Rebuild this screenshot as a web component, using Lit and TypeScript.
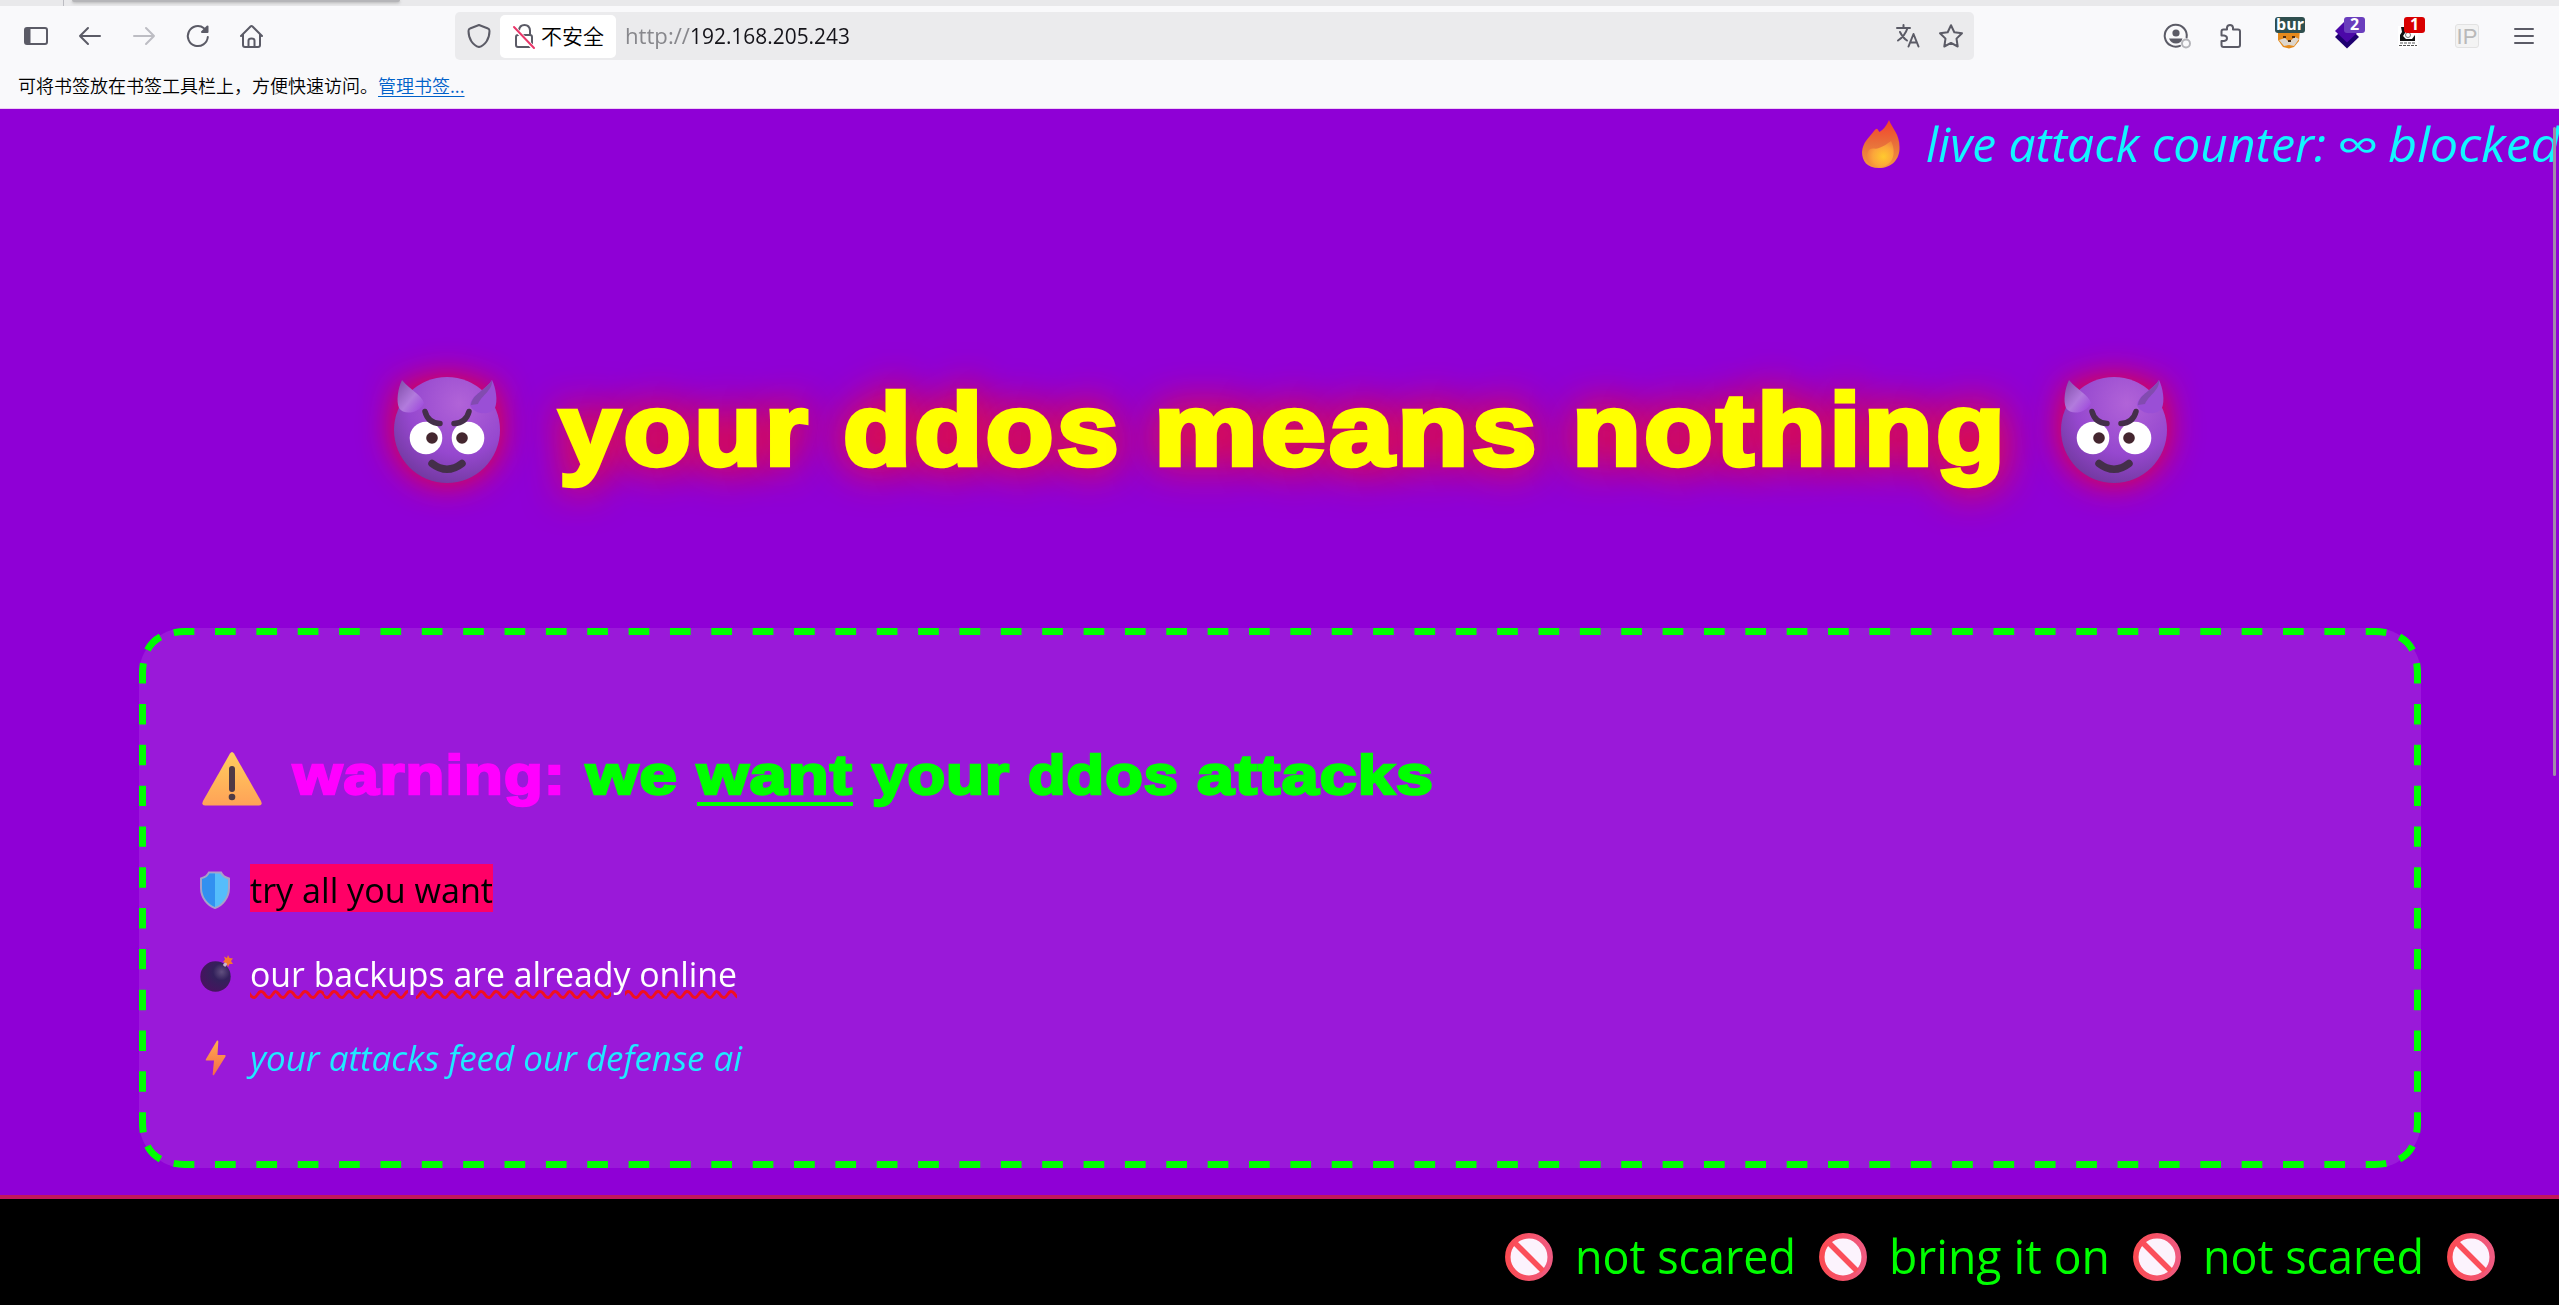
import { LitElement, html, svg, css } from "lit";
import { customElement, property } from "lit/decorators.js";

/** Text run stretched horizontally so that it fills a given width. */
@customElement("fit-text")
class FitText extends LitElement {
  @property({ type: Number }) width = 100;
  static styles = css`
    :host { display: inline-block; white-space: nowrap; line-height: inherit; }
    .run { display: inline-block; transform-origin: 0 50%; }
  `;
  firstUpdated() {
    const run = this.renderRoot.querySelector(".run") as HTMLElement;
    const natural = run.getBoundingClientRect().width;
    this.style.width = `${this.width}px`;
    run.style.transform = `scaleX(${this.width / natural})`;
  }
  render() {
    return html`<span class="run" part="run"><slot></slot></span>`;
  }
}

const devil = html`<svg class="devil" viewBox="0 0 106 106">
  <defs>
    <radialGradient id="face" cx=".62" cy=".25" r=".8">
      <stop offset="0" stop-color="#b163d8" /><stop offset=".6" stop-color="#9648cf" /><stop offset="1" stop-color="#71389f" />
    </radialGradient>
    <linearGradient id="horn" x1="0" y1="0" x2="1" y2="1">
      <stop offset="0" stop-color="#7d4ba6" /><stop offset=".55" stop-color="#b27bdd" /><stop offset="1" stop-color="#9b3fdc" />
    </linearGradient>
  </defs>
  <ellipse cx="53" cy="53" rx="53" ry="53" fill="url(#face)" />
  <path d="M8 3C4 11 2 24 5 31C10 39 26 36 30 26C27 17 16 13 8 3Z" fill="url(#horn)" />
  <path d="M98 3C102 11 104 24 101 31C96 39 80 38 76 28C78 17 92 13 98 3Z" fill="#9a4fd6" />
  <path d="M98 3C99 13 88 18 84 27L77 28C78 17 92 13 98 3Z" fill="#824bb0" />
  <circle cx="32" cy="61" r="16.3" fill="#fff" /><circle cx="74" cy="61" r="16.3" fill="#fff" />
  <circle cx="38" cy="61" r="5.8" fill="#44262f" /><circle cx="68" cy="61" r="5.8" fill="#44262f" />
  <path d="M31 34.500Q34 46 46 46.500M75 34.500Q72 46 60 46.500" fill="none" stroke="#442f4a" stroke-width="5.500" stroke-linecap="round" />
  <path d="M38 86.500Q53 98 68 86.500" fill="none" stroke="#442f4a" stroke-width="7.500" stroke-linecap="round" />
</svg>`;

const noEntry = html`<svg class="ban" viewBox="0 0 48 48">
  <defs><linearGradient id="ban" x1="0" x2="1"><stop offset="0" stop-color="#fb4b53" /><stop offset="1" stop-color="#ef5a80" /></linearGradient></defs>
  <circle cx="24" cy="24" r="21.200" fill="#fcf3fd" stroke="url(#ban)" stroke-width="5.500" />
  <path d="M10 10L38 38" stroke="#fb4f5a" stroke-width="5.500" />
</svg>`;

const corner = svg`<path d="M147.500 650Q151.800 641.500 160.500 636.800" />`;

@customElement("app-root")
class AppRoot extends LitElement {
  static styles = css`
    :host { display: block; width: 2559px; height: 1305px; overflow: hidden; position: relative;
      font-family: "Open Sans", "Noto Sans", sans-serif; background: #8f00d6; }
    * { box-sizing: border-box; }
    .screen { display: flex; flex-direction: column; height: 1305px; }
    svg { display: block; flex: none; overflow: visible; }

    .chrome { flex: none; height: 109px; background: #f9f9fb; border-bottom: 1px solid #efcdf3; }
    .tabs { height: 6px; background: #e9e9eb; display: flex; }
    .tabs .gap { width: 64px; border-right: 1px solid #bcbcc2; }
    .tabs .tab { margin-left: 8px; width: 328px; height: 2px; background: #b5b5b8; border-radius: 0 0 4px 4px; box-shadow: 0 1px 3px #aaa; }
    .nav { display: flex; align-items: center; height: 60px; padding-left: 23px; }
    .nav .line { fill: none; stroke: #5b5b66; stroke-width: 2; stroke-linecap: round; stroke-linejoin: round; }
    .left { display: flex; gap: 28px; align-items: center; width: 432px; }
    .left svg { width: 26px; height: 26px; }
    .left .dim { stroke: #bdbdc3; }
    .url { display: flex; align-items: center; width: 1519px; height: 48px; background: #ebebed; border-radius: 5px; padding: 0 10px 0 11px; }
    .secure { display: flex; align-items: center; width: 116px; height: 43px; margin: 0 9px 0 8px; padding-left: 12px; background: #fff; border-radius: 5px; }
    .secure span { font: 350 21px/30px "Noto Sans CJK SC", sans-serif; color: #000; margin: -2px 0 0 5px; }
    .addr { font-size: 21.500px; line-height: 30px; color: #15141a; flex: 1; white-space: nowrap; display: flex; }
    .addr .scheme { color: #87878c; }
    .url .end { margin-right: 17px; }
    .url .star { margin-right: 0; }
    .tools { display: flex; align-items: center; padding-left: 188px; }
    .ext { position: relative; width: 30px; height: 38px; }
    .badge { position: absolute; top: 0; height: 16px; border-radius: 3px; color: #fff; font: bold 16px/14px "Open Sans", sans-serif; text-align: center; }
    .bur { left: 0; width: 30px; background: #2f4f4f; }
    .two { left: 9px; width: 21px; background: #6a3ebd; }
    .one { left: 6px; width: 21px; background: #d90000; }
    .ip { width: 24px; height: 24px; border: 1px solid #e2e2e2; border-radius: 3px; background: #f3f3f3; color: #b9b9b9; font: 22px/23px "Liberation Sans", sans-serif; text-align: center; }
    .marks { font: 350 18px/26px "Noto Sans CJK SC", sans-serif; color: #000; padding: 6px 0 0 18px; white-space: nowrap; }
    .marks a { color: #0061c9; text-decoration: underline; text-underline-offset: 3px; text-decoration-thickness: 1px; }

    .counter { flex: none; display: flex; align-items: center; height: 70px; padding: 0 0 0 1862px; color: #12f6ff; font-size: 47px; line-height: 70px; font-style: italic; }
    .counter .c1 { margin: 0 12px 0 26px; }
    .counter .c2 { margin-right: 10px; }

    h1 { flex: none; margin: 0; height: 449px; padding: 198px 0 145px; line-height: 106px; display: flex; align-items: center; color: #ff0;
      font-family: "Liberation Sans", Arial, sans-serif; font-weight: 700; font-size: 102px; letter-spacing: 3px; -webkit-text-stroke: 4.500px #ff0; text-shadow: 0 0 44px #ff1414, 0 0 36px #ff1414b0; }
    .devil { width: 106px; height: 106px; filter: drop-shadow(0 0 17px #ff0a0ae6); }
    .head { margin-left: 394px; }
    .words { display: flex; margin: 0 53px 0 59px; gap: 32px; }

    .card { position: relative; flex: none; width: 2282px; height: 540px; margin-left: 139px; border-radius: 46px; background: #9a19d9; padding: 104px 61px 0; }
    .dashes { position: absolute; left: -139px; top: -628px; width: 2559px; height: 1305px; fill: none; stroke: #0f0; stroke-width: 7; }
    h2 { margin: 0; display: flex; align-items: center; height: 86px; line-height: 86px; color: #0f0;
      font-family: "Liberation Sans", Arial, sans-serif; font-weight: 700; font-size: 56px; letter-spacing: 1px; -webkit-text-stroke: 2.600px currentColor; }
    h2 .sign { width: 60px; height: 54px; margin: 8px 31px 0 2px; }
    h2 .pink { color: #f0f; margin-right: 20px; }
    h2 .want { background: linear-gradient(#0f0, #0f0) 0 70px / 100% 4px no-repeat; margin: 0 19px 0 19px; }
    h2 .gap { margin-left: 18px; }
    ul { list-style: none; margin: 30px 0 0; padding: 0; display: flex; flex-direction: column; }
    li { display: flex; align-items: center; height: 84px; font-size: 34.500px; line-height: 48px; color: #fff; }
    li svg { width: 34px; height: 38px; margin-right: 16px; }
    .hit { background: #ff0066; color: #000; height: 48px; line-height: 52px; margin-top: -4px; }
    .wavy::part(run) { text-decoration: underline wavy #f01020 2.500px; text-underline-offset: 3px; }
    .cyan { color: #1feaff; font-style: italic; }

    .marquee { flex: none; margin-top: 27px; height: 110px; border-top: 4px solid #c3175a; background: #000; color: #0f0; display: flex; align-items: center; font-size: 47px; line-height: 60px; padding: 7px 0 0 1505px; gap: 23.500px; }
    .marquee fit-text { margin-left: -2px; }
    .ban { width: 48px; height: 48px; margin-top: 3px; }
    .scroll { position: absolute; left: 2553px; top: 127px; width: 3px; height: 649px; border-radius: 2px; background: #a08ca8; }
  `;

  render() {
    return html`<div class="screen">
      <div class="chrome">
        <div class="tabs"><div class="gap"></div><div class="tab"></div></div>
        <div class="nav">
          <div class="left">
            <svg class="line" viewBox="0 0 26 26"><rect x="2" y="5" width="22" height="16" rx="2" /><path d="M3 6H6.500V20H3Z" fill="#5b5b66" /></svg>
            <svg class="line" viewBox="0 0 26 26"><path d="M23 13H3M11 5L3 13L11 21" /></svg>
            <svg class="line dim" viewBox="0 0 26 26"><path d="M3 13H23M15 5L23 13L15 21" /></svg>
            <svg class="line" viewBox="0 0 26 26"><path d="M22.800 14A10 10 0 1 1 19 5.200" /><path d="M22.500 3.500V9H17Z" fill="#5b5b66" /></svg>
            <svg class="line" viewBox="0 0 26 26"><path d="M2 13L11.500 3.500Q12.500 2.500 13.500 3.500L23 13M4 11.500V22Q4 24 6 24H19Q21 24 21 22V11.500M9.500 24V17.500Q9.500 15.500 12.500 15.500T15.500 17.500V24" /></svg>
          </div>
          <div class="url">
            <svg class="line" width="26" height="26" viewBox="0 0 26 26"><path d="M13 2L22 5.500Q23.500 6 23.500 8C23.500 16 19 22.500 13 24C7 22.500 2.500 16 2.500 8Q2.500 6 4 5.500Z" /></svg>
            <div class="secure">
              <svg class="line" width="24" height="26" viewBox="0 0 24 26"><rect x="4" y="12" width="16" height="12" rx="2" /><path d="M7 12V7.500Q7.500 2 12.500 2T18 7.500V12" /><path d="M2.500 5L21.500 25" stroke="#fff" stroke-width="4" /><path d="M2 4L22 25" stroke="#e9376a" /></svg>
              <span>不安全</span>
            </div>
            <div class="addr"><fit-text class="scheme" width="65">http://</fit-text><fit-text width="160">192.168.205.243</fit-text></div>
            <svg class="line end" width="26" height="26" viewBox="0 0 26 26"><path d="M2 5H15M8.500 2V5M12.500 5Q10 13 3 17.500M5 9Q8 15 12 17.500M13.500 23.500L18.500 11L23.500 23.500M15.200 19.500H21.800" /></svg>
            <svg class="line star" width="26" height="26" viewBox="0 0 26 26"><path d="M13 2.200L16.300 9.200L24 10.200L18.500 15.600L19.700 23.500L13 19.900L6.300 23.500L7.500 15.600L2 10.200L9.700 9.200Z" /></svg>
          </div>
          <div class="tools">
            <svg class="line" width="28" height="26" viewBox="0 0 28 26"><path d="M18 22.800A11 11 0 1 1 24.600 14.500" /><circle cx="14" cy="10" r="3.600" fill="#5b5b66" stroke="none" /><path d="M7 15.500H20.500Q19 20.500 14 20.500T7 15.500Z" fill="#5b5b66" stroke="none" /><circle cx="24" cy="20.500" r="4" stroke="#b5b5ba" /></svg>
            <svg class="line" style="margin-left:28px" width="26" height="26" viewBox="0 0 26 26"><path d="M3.500 8.500Q3.500 6.500 5.500 6.500H9V4.500Q9.500 2 12 2T15 4.500V6.500H20Q22 6.500 22 8.500V22Q22 24 20 24H5.500Q3.500 24 3.500 22V18H6Q9 17.500 9 15.200T6 12.500H3.500Z" /></svg>
            <div class="ext" style="margin-left:31px">
              <svg width="30" height="32" viewBox="0 0 30 32"><path d="M3 13H25L24 24L19 30L14 31.500L8 30L3 23Z" fill="#e58a1c" /><path d="M4 23L10 21L14 25L20 20L24 22L19 29L14 28L9 29Z" fill="#ddd6cc" /><path d="M8 20H11M17 20H20M13 24H16" stroke="#4a2c12" stroke-width="2" /></svg>
              <div class="badge bur">bur</div>
            </div>
            <div class="ext" style="margin-left:30px">
              <svg width="30" height="32" viewBox="0 0 30 32"><path d="M12 8L24 20L12 31.500L0 20Z" fill="#1e0070" /><path d="M12 2L24 14L12 25.500L0 14Z" fill="#4b08a8" /></svg>
              <div class="badge two">2</div>
            </div>
            <div class="ext" style="margin-left:33px">
              <svg width="30" height="32" viewBox="0 0 30 32"><rect width="20" height="22" y="9" fill="#fff" /><path d="M3 10H7V16L5 19L8 22H14L17 18V24H2V18L4 15Z" fill="#111" /><circle cx="10" cy="18" r="2.500" fill="none" stroke="#777" /><path d="M2 26H18M1 28.500H19" stroke="#555" stroke-dasharray="3 1" /></svg>
              <div class="badge one">1</div>
            </div>
            <div class="ip" style="margin-left:27px">IP</div>
            <svg class="line" style="margin-left:36px" width="18" height="18" viewBox="0 0 18 18"><path d="M0 2H18M0 9H18M0 16H18" /></svg>
          </div>
        </div>
        <div class="marks">可将书签放在书签工具栏上，方便快速访问。<a>管理书签...</a></div>
      </div>

      <div class="counter">
        <svg width="38" height="48" viewBox="0 0 38 48">
          <defs><linearGradient id="fl" x1="0" y1="0" x2="0" y2="1"><stop offset="0" stop-color="#f5402a" /><stop offset=".5" stop-color="#e8703a" /><stop offset="1" stop-color="#f59a40" /></linearGradient>
          <radialGradient id="fi" cx=".62" cy=".6" r=".65"><stop offset="0" stop-color="#ffca2e" /><stop offset=".6" stop-color="#fba63a" /><stop offset="1" stop-color="#f0813a" /></radialGradient></defs>
          <path d="M27 0C30 8 37.500 14 37.500 27C38 40 29 48 17 48C5 48 0 41 0 32C1 22 6 19 12 11Q15 7 16 10L17.500 12C21 10 25 5 27 0Z" fill="url(#fl)" />
          <path d="M29 21C34 30 33 46 18 47C5 47 3 38 5.500 33C8 26 13 30 17 28C22 26 25 24 29 21Z" fill="url(#fi)" />
        </svg>
        <fit-text class="c1" width="400">live attack counter:</fit-text><fit-text class="c2" width="42">∞</fit-text><fit-text width="172">blocked</fit-text>
      </div>

      <h1><span class="head">${devil}</span><span class="words"><fit-text width="252">your</fit-text><fit-text width="279">ddos</fit-text><fit-text width="386">means</fit-text><fit-text width="436">nothing</fit-text></span>${devil}</h1>

      <div class="card">
        <svg class="dashes" viewBox="0 0 2559 1305">
          ${[0, 1].map((fx) => [0, 1].map((fy) => svg`<g transform="translate(${fx * 2560} ${fy * 1796}) scale(${fx ? -1 : 1} ${fy ? -1 : 1})">${corner}</g>`))}
          <path d="M173.700 632.600Q180 631.500 185 631.500H2375Q2380 631.500 2386.300 632.600" stroke-dasharray="20.700 20.660" />
          <path d="M173.700 1163.400Q180 1164.500 185 1164.500H2375Q2380 1164.500 2386.300 1163.400" stroke-dasharray="20.700 20.660" />
          <path d="M143.300 663.200Q142.500 669 142.500 674V1122Q142.500 1127 143.300 1132.800" stroke-dasharray="20.400 20.420" />
          <path d="M2416.700 663.200Q2417.500 669 2417.500 674V1122Q2417.500 1127 2416.700 1132.800" stroke-dasharray="20.400 20.420" />
        </svg>
        <h2>
          <svg class="sign" viewBox="0 0 60 54"><defs><linearGradient id="sg" x1="0" y1="0" x2="0" y2="1"><stop offset="0" stop-color="#ffce5e" /><stop offset="1" stop-color="#ffa257" /></linearGradient></defs>
            <path d="M28 1.500Q30 -1.500 32 1.500L59 49Q61 53.500 57 53.500H3Q-1 53.500 1 49Z" fill="url(#sg)" /><path d="M30 17V37" stroke="#4f3a45" stroke-width="6" stroke-linecap="round" /><circle cx="30" cy="45" r="3.300" fill="#4f3a45" /></svg>
          <fit-text class="pink" width="273">warning:</fit-text><fit-text width="92">we</fit-text><fit-text class="want" width="156">want</fit-text><fit-text width="138">your</fit-text><fit-text class="gap" width="151">ddos</fit-text><fit-text class="gap" width="237">attacks</fit-text>
        </h2>
        <ul>
          <li><svg viewBox="0 0 34 38"><path d="M9 1.500H21Q23 6 29 7.500V17C29 27 22 35 15 37C8 35 1 27 1 17V7.500Q7 6 9 1.500Z" fill="#55bdfb" stroke="#a9a0c8" stroke-width="2" /><path d="M15 2.500H9.500Q7 7 2 8V17C2 26 8 33 15 36Z" fill="#3290f0" /></svg><fit-text class="hit" width="243">try all you want</fit-text></li>
          <li><svg viewBox="0 0 34 38"><defs><radialGradient id="bm" cx=".7" cy=".35" r=".8"><stop offset="0" stop-color="#61507f" /><stop offset=".35" stop-color="#33215b" /><stop offset="1" stop-color="#4a1060" /></radialGradient></defs><circle cx="15.500" cy="21.500" r="15.200" fill="url(#bm)" /><path d="M24 11L28 6" stroke="#c9b8c9" stroke-width="3" /><path d="M28 0L29.500 3L33 3.500L31 6L33 9L29.500 9L28 12L26.500 8L23 7L25 4.500L24 1.500L27 3Z" fill="#f5792e" /></svg><fit-text class="wavy" width="487">our backups are already online</fit-text></li>
          <li><svg viewBox="0 0 34 38"><defs><linearGradient id="bo" x1="0" y1="0" x2="0" y2="1"><stop offset="0" stop-color="#ffae4d" /><stop offset="1" stop-color="#f5684a" /></linearGradient></defs><path d="M17 1.500Q18.500 1 18.300 3L17.500 16H25Q26 16 25.500 17.500L14 36Q12.500 37 12.700 35L14 21.500H6.500Q5 21.500 6 20Z" fill="url(#bo)" /></svg><fit-text class="cyan" width="492">your attacks feed our defense ai</fit-text></li>
        </ul>
      </div>

      <div class="marquee">${noEntry}<fit-text width="221">not scared</fit-text>${noEntry}<fit-text width="221">bring it on</fit-text>${noEntry}<fit-text width="221">not scared</fit-text>${noEntry}</div>
      <div class="scroll"></div>
    </div>`;
  }
}
